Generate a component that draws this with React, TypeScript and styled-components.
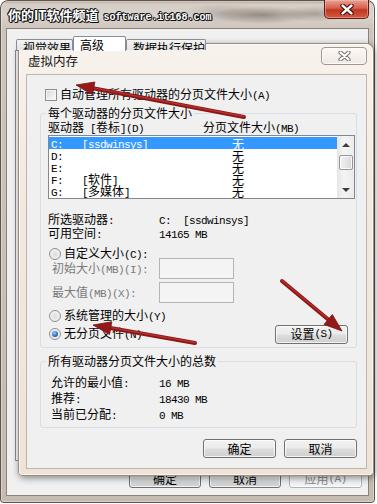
import React from "react";
import styled, { createGlobalStyle } from "styled-components";

const CJK = `"Noto Sans CJK SC", "Liberation Sans", sans-serif`;
const MONO = `"Liberation Mono", "DejaVu Sans Mono", monospace`;

const GlobalStyle = createGlobalStyle`
  *, *::before, *::after { box-sizing: border-box; }
  html, body { margin: 0; padding: 0; background: #ffffff; }
  body { font-family: ${CJK}; font-size: 12px; line-height: 14px; color: #000; }
`;

const Stage = styled.div`
  position: relative;
  width: 377px;
  height: 504px;
  overflow: hidden;
  background: #ffffff;
`;

/* ---------- outer window (系统属性) ---------- */

const OuterWindow = styled.div`
  width: 375px;
  height: 503px;
  display: flex;
  flex-direction: column;
  padding: 0 7px 8px 7px;
  border-radius: 8px 8px 4px 4px;
  background:
    radial-gradient(ellipse 50px 9px at 262px 15px, rgba(92, 80, 70, 0.55), rgba(92, 80, 70, 0) 100%),
    radial-gradient(ellipse 34px 8px at 314px 14px, rgba(110, 98, 88, 0.45), rgba(110, 98, 88, 0) 100%),
    radial-gradient(ellipse 40px 10px at 222px 13px, rgba(140, 128, 118, 0.4), rgba(140, 128, 118, 0) 100%),
    linear-gradient(180deg, #a39488 0px, #d5cdc6 4px, #d9d3cd 16px, #cdc4bb 29px, #c6bbb1 100%);
  box-shadow: inset 0 0 0 1px #5f534b, inset 0 0 0 2px rgba(255, 255, 255, 0.35);
`;

const OuterTitleBar = styled.div`
  height: 29px;
  flex: none;
  display: flex;
  align-items: center;
  padding-top: 3px;
`;

const Watermark = styled.span`
  margin-left: 1px;
  font-family: ${CJK};
  font-size: 13px;
  font-weight: 700;
  line-height: 16px;
  color: #ffffff;
  white-space: nowrap;
  text-shadow: -1px 0 #111, 1px 0 #111, 0 -1px #111, 0 1px #111, 1px 1px #111, -1px -1px #111;
`;

const WatermarkUrl = styled.span`
  margin-left: 5px;
  font-family: ${MONO};
  font-size: 10px;
  font-weight: 700;
`;

const OuterClose = styled.div`
  align-self: flex-start;
  margin-top: -3px;
  margin-left: auto;
  margin-right: -1px;
  width: 45px;
  height: 19px;
  display: flex;
  align-items: center;
  justify-content: center;
  border: 1px solid #5c1d14;
  border-top: none;
  border-radius: 0 0 5px 5px;
  background: linear-gradient(180deg, #e7a394 0%, #d6604b 45%, #c03722 55%, #d4593f 100%);
  box-shadow: inset 0 0 0 1px rgba(255, 200, 190, 0.45);
`;

const OuterClient = styled.div`
  flex: 1;
  display: flex;
  flex-direction: column;
  padding: 7px 0 7px 0;
  background: #f0f0f0;
  box-shadow: 0 0 0 1px #8d8178;
`;

const TabStrip = styled.div`
  height: 14px;
  flex: none;
  display: flex;
  align-items: flex-end;
  padding-left: 9px;
  position: relative;
  z-index: 1;
`;

const Tab = styled.div<{ $w: number; $active?: boolean }>`
  width: ${(p) => p.$w}px;
  height: ${(p) => (p.$active ? 15 : 11)}px;
  margin-bottom: ${(p) => (p.$active ? -1 : 0)}px;
  padding: 1px 0 0 6px;
  border: 1px solid #898c95;
  border-bottom: none;
  border-radius: 2px 2px 0 0;
  background: ${(p) => (p.$active ? "#ffffff" : "linear-gradient(180deg, #f3f3f3, #e3e3e3)")};
  font-size: 12px;
  line-height: 14px;
  white-space: nowrap;
  overflow: hidden;
`;

const TabPanel = styled.div`
  flex: 1;
  margin: 0 7px 0 8px;
  border: 1px solid #898c95;
  background: #fbfbfb;
`;

const ButtonRow = styled.div<{ $pad: number; $top: number }>`
  display: flex;
  justify-content: flex-end;
  gap: 8px;
  margin-top: ${(p) => p.$top}px;
  padding-right: ${(p) => p.$pad}px;
  flex: none;
`;

const WinButton = styled.button<{ $w: number; $disabled?: boolean }>`
  width: ${(p) => p.$w}px;
  height: 19px;
  padding: 0;
  margin: 0;
  display: flex;
  align-items: center;
  justify-content: center;
  font-family: ${CJK};
  font-size: 12px;
  line-height: 14px;
  color: ${(p) => (p.$disabled ? "#8a8a8a" : "#000000")};
  border: 1px solid ${(p) => (p.$disabled ? "#adb2b5" : "#707070")};
  border-radius: 3px;
  background: ${(p) =>
    p.$disabled
      ? "#f4f4f4"
      : "linear-gradient(180deg, #f2f2f2 0%, #ebebeb 48%, #dddddd 52%, #cfcfcf 100%)"};
  box-shadow: inset 0 0 0 1px rgba(255, 255, 255, 0.75);
`;

/* ---------- inner dialog (虚拟内存) ---------- */

const InnerDialog = styled.div`
  position: absolute;
  left: 19px;
  top: 44px;
  width: 354px;
  height: 431px;
  display: flex;
  flex-direction: column;
  padding: 0 7px 7px 8px;
  border-radius: 7px 7px 4px 4px;
  background: linear-gradient(180deg, #f8f2ed 0%, #f2e8df 40%, #efe3d8 100%);
  box-shadow: 0 0 0 1px #9c8c80, inset 0 0 0 1px rgba(255, 255, 255, 0.6),
    1px 2px 7px 1px rgba(0, 0, 0, 0.45);
`;

const InnerTitleBar = styled.div`
  height: 31px;
  flex: none;
  display: flex;
  align-items: flex-start;
`;

const InnerTitle = styled.span`
  margin-top: 9px;
  padding-left: 1px;
  font-size: 12.5px;
  line-height: 15px;
  color: #111;
`;

const InnerClose = styled.div`
  margin-top: 3px;
  margin-left: auto;
  margin-right: -1px;
  width: 46px;
  height: 18px;
  display: flex;
  align-items: center;
  justify-content: center;
  border: 1px solid #a2968d;
  border-radius: 4px;
  background: linear-gradient(180deg, #fbf8f5 0%, #f1e9e2 100%);
  box-shadow: inset 0 0 0 1px rgba(255, 255, 255, 0.7);
`;

const InnerClient = styled.div`
  flex: 1;
  display: flex;
  flex-direction: column;
  padding: 0 9px 0 13px;
  background: #f0f0f0;
  box-shadow: 0 0 0 1px #c2b4a8;
`;

const CheckRow = styled.div`
  height: 14px;
  margin-top: 13px;
  margin-left: 5px;
  display: flex;
  align-items: center;
  gap: 3px;
  white-space: nowrap;
`;

const Checkbox = styled.span`
  width: 12px;
  height: 12px;
  flex: none;
  border: 1px solid #8f8f8f;
  background: linear-gradient(135deg, #d4d4d4 0%, #f6f6f6 80%);
  box-shadow: inset 0 0 0 1px #f4f4f4;
`;

const GroupBox = styled.div<{ $top: number; $pl: number; $pr: number; $pb: number }>`
  margin-top: ${(p) => p.$top}px;
  display: flex;
  flex-direction: column;
  padding: 0 ${(p) => p.$pr}px ${(p) => p.$pb}px ${(p) => p.$pl}px;
  border: 1px solid #d5dfe5;
  border-radius: 3px;
`;

const GroupTitle = styled.span<{ $shift: number }>`
  align-self: flex-start;
  margin: -8px 0 0 ${(p) => p.$shift}px;
  padding: 0 2px;
  line-height: 14px;
  background: #f0f0f0;
  white-space: nowrap;
`;

const HeaderRow = styled.div`
  height: 14px;
  display: grid;
  grid-template-columns: 155px 1fr;
  white-space: nowrap;
`;

const ListBox = styled.div`
  height: 64px;
  margin-top: 1px;
  display: flex;
  border: 1px solid #828790;
  background: #ffffff;
`;

const ListRows = styled.div`
  flex: 1;
  padding: 1px 0;
`;

const ListRow = styled.div<{ $selected?: boolean }>`
  height: 12px;
  display: grid;
  grid-template-columns: 31px 150px 1fr;
  align-items: center;
  padding-left: 2px;
  line-height: 12px;
  white-space: nowrap;
  color: ${(p) => (p.$selected ? "#ffffff" : "#000000")};
  background: ${(p) => (p.$selected ? "#3399ff" : "transparent")};
`;

const ScrollBar = styled.div`
  width: 17px;
  flex: none;
  display: flex;
  flex-direction: column;
  align-items: center;
  background: linear-gradient(90deg, #e6e6e6, #f4f4f4 40%, #ececec);
`;

const ScrollButton = styled.div`
  width: 17px;
  height: 17px;
  flex: none;
  display: flex;
  align-items: center;
  justify-content: center;
`;

const Triangle = styled.span<{ $down?: boolean }>`
  width: 0;
  height: 0;
  border-left: 4px solid transparent;
  border-right: 4px solid transparent;
  ${(p) => (p.$down ? "border-top: 4px solid #3c3c3c;" : "border-bottom: 4px solid #3c3c3c;")}
`;

const Thumb = styled.div`
  width: 14px;
  height: 15px;
  margin-top: 2px;
  border: 1px solid #979797;
  border-radius: 2px;
  background: linear-gradient(90deg, #f3f3f3 0%, #e6e6e6 50%, #d8d8d8 100%);
  box-shadow: inset 0 0 0 1px rgba(255, 255, 255, 0.8);
`;

const Spacer = styled.div`
  flex: 1;
`;

const InfoRow = styled.div<{ $top?: number; $label: number; $h: number }>`
  height: ${(p) => p.$h}px;
  margin-top: ${(p) => p.$top ?? 0}px;
  display: grid;
  grid-template-columns: ${(p) => p.$label}px 1fr;
  align-items: center;
  white-space: nowrap;
`;

const RadioRow = styled.div<{ $top: number }>`
  height: 14px;
  margin-top: ${(p) => p.$top}px;
  margin-left: 1px;
  display: flex;
  align-items: center;
  gap: 3px;
  white-space: nowrap;
`;

const Radio = styled.span<{ $checked?: boolean }>`
  width: 12px;
  height: 12px;
  flex: none;
  display: inline-flex;
  align-items: center;
  justify-content: center;
  border-radius: 50%;
  border: 1px solid #8e8f8f;
  background: radial-gradient(circle at 50% 55%, #dadada 0%, #eeeeee 55%, #f8f8f8 100%);
  &::after {
    content: "";
    display: ${(p) => (p.$checked ? "block" : "none")};
    width: 6px;
    height: 6px;
    border-radius: 50%;
    background: radial-gradient(circle at 40% 35%, #9fd0f7 0%, #2c6fbf 55%, #17488a 100%);
  }
`;

const SizeRow = styled.div<{ $top: number }>`
  height: 21px;
  margin-top: ${(p) => p.$top}px;
  padding-left: 4px;
  display: grid;
  grid-template-columns: 107px 75px;
  align-items: center;
  white-space: nowrap;
  color: #7a7a7a;
`;

const TextInput = styled.div`
  height: 21px;
  border: 1px solid #b5b5b5;
  background: #f4f4f4;
`;

const LastRow = styled.div`
  height: 20px;
  margin-top: 1px;
  padding: 0 7px 0 1px;
  display: flex;
  align-items: center;
  gap: 3px;
  white-space: nowrap;
`;

const PushRight = styled.div`
  margin-left: auto;
`;

const M = styled.span`
  font-family: ${MONO};
  font-size: 11px;
  letter-spacing: -0.6px;
  white-space: pre;
`;

const ArrowLayer = styled.svg`
  position: absolute;
  left: 0;
  top: 0;
  pointer-events: none;
`;

/* ---------- helpers ---------- */

function mixed(text: string): React.ReactNode[] {
  const parts = text.match(/[\x00-\x7f]+|[^\x00-\x7f]+/g) ?? [];
  return parts.map((p, i) => (/^[\x00-\x7f]+$/.test(p) ? <M key={i}>{p}</M> : <span key={i}>{p}</span>));
}

const CloseGlyph: React.FC<{ fill: string; stroke: string; w: number; h: number }> = ({ fill, stroke, w, h }) => (
  <svg width={w} height={h} viewBox="0 0 12 10">
    <path d="M2 1.5 L10 8.5 M10 1.5 L2 8.5" stroke={stroke} strokeWidth={4.2} strokeLinecap="round" fill="none" />
    <path d="M2 1.5 L10 8.5 M10 1.5 L2 8.5" stroke={fill} strokeWidth={2.2} strokeLinecap="round" fill="none" />
  </svg>
);

type ArrowSpec = { x1: number; y1: number; x2: number; y2: number };
const ARROWS: ArrowSpec[] = [
  { x1: 244, y1: 117, x2: 76, y2: 85 },
  { x1: 282, y1: 281, x2: 342, y2: 331 },
  { x1: 195, y1: 343, x2: 93, y2: 325 },
];

const RedArrow: React.FC<{ a: ArrowSpec }> = ({ a }) => {
  const len = 18;
  const half = 6.5;
  const dx = a.x2 - a.x1;
  const dy = a.y2 - a.y1;
  const L = Math.hypot(dx, dy);
  const ux = dx / L;
  const uy = dy / L;
  const bx = a.x2 - ux * len;
  const by = a.y2 - uy * len;
  const nx = -uy;
  const ny = ux;
  const pts = `${a.x2},${a.y2} ${bx + nx * half},${by + ny * half} ${bx - nx * half},${by - ny * half}`;
  return (
    <g>
      <line x1={a.x1} y1={a.y1} x2={bx + ux * 2} y2={by + uy * 2} stroke="#8a1616" strokeWidth={4} strokeLinecap="round" />
      <line x1={a.x1} y1={a.y1 - 0.5} x2={bx} y2={by - 0.5} stroke="#b83030" strokeWidth={1.3} strokeLinecap="round" />
      <polygon points={pts} fill="#941a1a" stroke="#7d1212" strokeWidth={0.8} strokeLinejoin="round" />
    </g>
  );
};

const DRIVES = [
  { d: "C:", l: "[ssdwinsys]", s: "无", sel: true },
  { d: "D:", l: "", s: "无" },
  { d: "E:", l: "", s: "无" },
  { d: "F:", l: "[软件]", s: "无" },
  { d: "G:", l: "[多媒体]", s: "无" },
];

export default function App() {
  return (
    <Stage>
      <GlobalStyle />
      <OuterWindow>
        <OuterTitleBar>
          <Watermark>
            你的IT软件频道<WatermarkUrl>software.it168.com</WatermarkUrl>
          </Watermark>
          <OuterClose>
            <CloseGlyph fill="#ffffff" stroke="#4a1510" w={14} h={11} />
          </OuterClose>
        </OuterTitleBar>
        <OuterClient>
          <TabStrip>
            <Tab $w={57}>视觉效果</Tab>
            <Tab $w={53} $active>高级</Tab>
            <Tab $w={80}>数据执行保护</Tab>
          </TabStrip>
          <TabPanel />
          <ButtonRow $pad={6} $top={8}>
            <WinButton $w={72}>确定</WinButton>
            <WinButton $w={72}>取消</WinButton>
            <WinButton $w={73} $disabled>
              {mixed("应用(A)")}
            </WinButton>
          </ButtonRow>
        </OuterClient>
      </OuterWindow>

      <InnerDialog>
        <InnerTitleBar>
          <InnerTitle>虚拟内存</InnerTitle>
          <InnerClose>
            <CloseGlyph fill="#ffffff" stroke="#7b7570" w={13} h={10} />
          </InnerClose>
        </InnerTitleBar>
        <InnerClient>
          <CheckRow>
            <Checkbox />
            <span>{mixed("自动管理所有驱动器的分页文件大小(A)")}</span>
          </CheckRow>

          <GroupBox $top={11} $pl={7} $pr={1} $pb={3}>
            <GroupTitle $shift={-2}>每个驱动器的分页文件大小</GroupTitle>
            <HeaderRow>
              <span>{mixed("驱动器 [卷标](D)")}</span>
              <span>{mixed("分页文件大小(MB)")}</span>
            </HeaderRow>
            <ListBox>
              <ListRows>
                {DRIVES.map((r) => (
                  <ListRow key={r.d} $selected={r.sel}>
                    <span>{mixed(r.d)}</span>
                    <span>{mixed(r.l)}</span>
                    <span>{r.s}</span>
                  </ListRow>
                ))}
              </ListRows>
              <ScrollBar>
                <ScrollButton>
                  <Triangle />
                </ScrollButton>
                <Thumb />
                <Spacer />
                <ScrollButton>
                  <Triangle $down />
                </ScrollButton>
              </ScrollBar>
            </ListBox>
            <InfoRow $top={13} $label={111} $h={14}>
              <span>{mixed("所选驱动器:")}</span>
              <span>{mixed("C:  [ssdwinsys]")}</span>
            </InfoRow>
            <InfoRow $label={111} $h={14}>
              <span>{mixed("可用空间:")}</span>
              <span>{mixed("14165 MB")}</span>
            </InfoRow>
            <RadioRow $top={7}>
              <Radio />
              <span>{mixed("自定义大小(C):")}</span>
            </RadioRow>
            <SizeRow $top={-3}>
              <span>{mixed("初始大小(MB)(I):")}</span>
              <TextInput />
            </SizeRow>
            <SizeRow $top={3}>
              <span>{mixed("最大值(MB)(X):")}</span>
              <TextInput />
            </SizeRow>
            <RadioRow $top={6}>
              <Radio />
              <span>{mixed("系统管理的大小(Y)")}</span>
            </RadioRow>
            <LastRow>
              <Radio $checked />
              <span>{mixed("无分页文件(N)")}</span>
              <PushRight>
                <WinButton $w={73}>{mixed("设置(S)")}</WinButton>
              </PushRight>
            </LastRow>
          </GroupBox>

          <GroupBox $top={13} $pl={10} $pr={0} $pb={4}>
            <GroupTitle $shift={-5}>所有驱动器分页文件大小的总数</GroupTitle>
            <InfoRow $top={7} $label={108} $h={16}>
              <span>{mixed("允许的最小值:")}</span>
              <span>{mixed("16 MB")}</span>
            </InfoRow>
            <InfoRow $label={108} $h={16}>
              <span>{mixed("推荐:")}</span>
              <span>{mixed("18430 MB")}</span>
            </InfoRow>
            <InfoRow $label={108} $h={16}>
              <span>{mixed("当前已分配:")}</span>
              <span>{mixed("0 MB")}</span>
            </InfoRow>
          </GroupBox>

          <ButtonRow $pad={0} $top={11}>
            <WinButton $w={73}>确定</WinButton>
            <WinButton $w={73}>取消</WinButton>
          </ButtonRow>
        </InnerClient>
      </InnerDialog>

      <ArrowLayer width={377} height={504} viewBox="0 0 377 504">
        {ARROWS.map((a, i) => (
          <RedArrow key={i} a={a} />
        ))}
      </ArrowLayer>
    </Stage>
  );
}
